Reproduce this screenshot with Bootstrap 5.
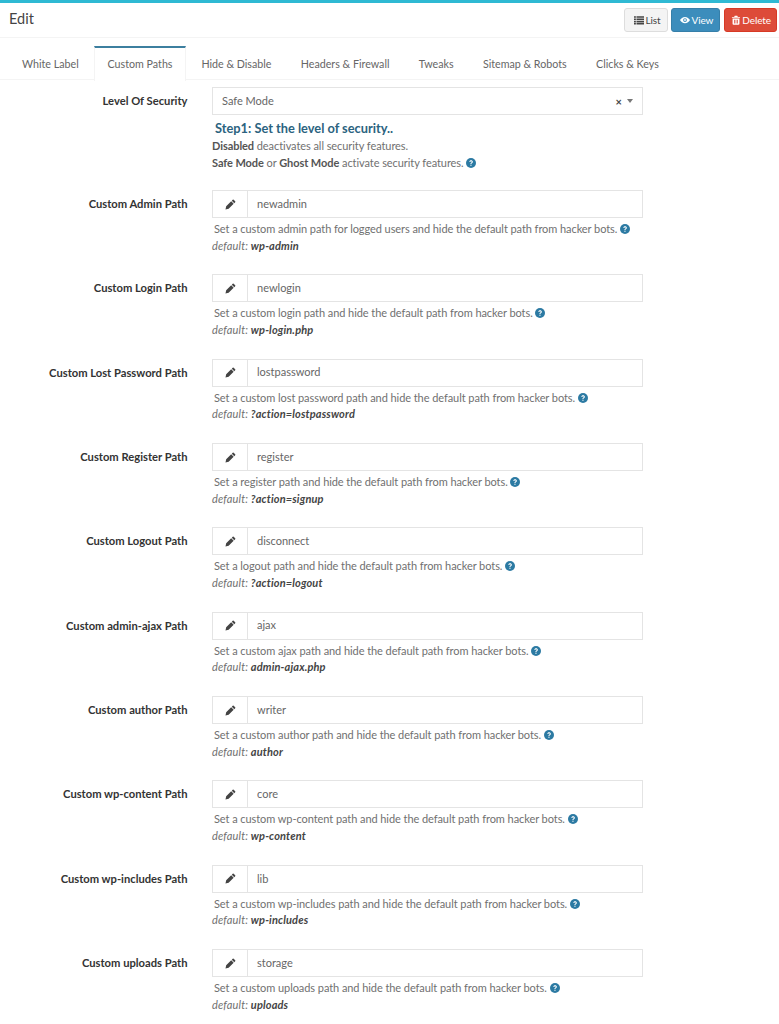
<!DOCTYPE html>
<html lang="en"><head><meta charset="utf-8"><title>Edit</title>
<link href="https://cdn.jsdelivr.net/npm/bootstrap@5.3.0/dist/css/bootstrap.min.css" rel="stylesheet">
<style>
body{font-family:Lato,"Noto Sans",sans-serif;font-size:11px;color:#707070;background:#fff;overflow:hidden}
.panel-box{border-top:3px solid #2fb9d3;height:1024px}
.panel-head{height:35px;padding:0 2px 0 9px;border-bottom:1px solid #f4f4f4}
.panel-title{font-size:14.5px;color:#444;margin-top:-2px}
.act-wrap{gap:3px}
.act{font-size:10px;height:24px;padding:0 6px 0 8px;border-radius:3px;border:1px solid;display:inline-flex;align-items:center;gap:1px;letter-spacing:-.1px}
.act svg{width:10px;height:10px;fill:currentColor}
.act-list{background:#f4f4f4;border-color:#ddd;color:#444;padding:0 7px 0 9px}
.act-view{background:#3c8dbc;border-color:#367fa9;color:#fff}
.act-del{background:#dd4b39;border-color:#d73925;color:#fff;padding:0 5px 0 6px;margin-left:1px}
.tabbar{margin-top:8px;height:34px;padding-left:7.300px;border-bottom:1px solid #f4f4f4}
.tabitem{padding:0 14.700px;line-height:32px;color:#666;border-top:2px solid transparent;font-size:10.7px}
.tabitem.on{padding:0 12.500px;margin:0 .7px;border-top-color:#3c7f9f;border-left:1px solid #f4f4f4;border-right:1px solid #f4f4f4;background:#fff;height:35px}
.sec-row{height:84.35px}
.sec-row.first{height:103px;margin-top:7px}
.sec-label{width:187.500px;flex:none;text-align:right;font-weight:700;color:#333;line-height:28px;font-size:11.2px}
.sec-main{width:431px;flex:none;margin-left:24.500px}
.sec-select{height:28px;border:1px solid #e4e4e4;padding:0 9px;color:#666}
.xmark{font-size:11px;font-weight:700;color:#444;margin-right:5px;line-height:1}
.caret-d{width:0;height:0;border:3.500px solid transparent;border-top:4px solid #777;border-bottom:0}
.sec-input{height:28px;border:1px solid #e4e4e4}
.sec-addon{width:35px;border-right:1px solid #e4e4e4;flex:none}
.sec-addon svg{width:11px;height:11px;fill:#444}
.sec-val{padding-left:9px;color:#666}
.hlp{line-height:16.500px;margin-top:3px}
.hlp.lead-in{margin-top:1px}
.hlp p{margin:0;white-space:nowrap;letter-spacing:-.07px}
.hlp .ind{padding-left:2px}
.hlp b{color:#555;font-weight:700}
.hlp .dflt{letter-spacing:.15px}
.hlp .dflt b{color:#444}
.steptxt{font-size:12.800px;font-weight:700;color:#2b6380;padding-left:3px;line-height:18px;margin-top:4px}
.qm{width:10px;height:10px;display:inline-block;vertical-align:-1px;margin-left:0}
</style></head><body>
<svg width="0" height="0" class="d-block" aria-hidden="true"><defs>
<symbol id="q" viewBox="0 0 20 20"><circle cx="10" cy="10" r="10" fill="#2c7aa3"/><path d="M6.6 7.6C6.8 5.6 8.300 4.600 10.200 4.600c2 0 3.500 1.200 3.500 3 0 1.500-.9 2.200-1.900 2.900-.7.500-.9.800-.9 1.700H8.800c0-1.500.4-2.200 1.400-2.900.8-.6 1.300-1 1.300-1.600 0-.7-.6-1.200-1.400-1.200-.9 0-1.400.5-1.500 1.400z" fill="#fff"/><rect x="8.800" y="13.400" width="2.200" height="2.200" fill="#fff"/></symbol>
<symbol id="pen" viewBox="0 0 16 16"><path d="M11.200 1.200a1 1 0 0 1 1.400 0l2.200 2.200a1 1 0 0 1 0 1.400l-1.300 1.300-3.600-3.600zM9 3.400l3.600 3.600-7.300 7.300-4.600 1 1-4.600z"/></symbol>
<symbol id="lst" viewBox="0 0 16 16"><path d="M0 2h3v2.500H0zM4 2h12v2.500H4zM0 5.500h3V8H0zM4 5.500h12V8H4zM0 9h3v2.500H0zM4 9h12v2.500H4zM0 12.500h3V15H0zM4 12.500h12V15H4z"/></symbol>
<symbol id="eye" viewBox="0 0 16 16"><path fill-rule="evenodd" d="M8 3C4.500 3 1.600 5.200 0 8c1.600 2.800 4.500 5 8 5s6.400-2.200 8-5c-1.600-2.800-4.500-5-8-5zm0 2a3 3 0 1 1 0 6 3 3 0 0 1 0-6z"/><circle cx="8" cy="8" r="1.500"/></symbol>
<symbol id="trs" viewBox="0 0 16 16"><path d="M6 1h4l1 2h3.500v1.500h-13V3H5zM2.500 5.500h11V14a1.500 1.500 0 0 1-1.500 1.500H4A1.500 1.500 0 0 1 2.500 14zM5 7.500v6h1.200v-6zm2.400 0v6h1.200v-6zm2.400 0v6H11v-6z"/></symbol>
</defs></svg>
<div class="panel-box">
 <div class="panel-head d-flex align-items-center justify-content-between">
  <span class="panel-title">Edit</span>
  <div class="d-flex act-wrap">
   <a class="act act-list text-decoration-none"><svg><use href="#lst"/></svg>List</a>
   <a class="act act-view text-decoration-none"><svg><use href="#eye"/></svg>View</a>
   <a class="act act-del text-decoration-none"><svg><use href="#trs"/></svg>Delete</a>
  </div>
 </div>
 <div class="tabbar d-flex">
  <span class="tabitem">White Label</span><span class="tabitem on">Custom Paths</span><span class="tabitem">Hide &amp; Disable</span><span class="tabitem">Headers &amp; Firewall</span><span class="tabitem">Tweaks</span><span class="tabitem">Sitemap &amp; Robots</span><span class="tabitem">Clicks &amp; Keys</span>
 </div>
 <div class="sec-row first d-flex">
  <div class="sec-label">Level Of Security</div>
  <div class="sec-main">
   <div class="sec-select d-flex align-items-center"><span class="flex-grow-1">Safe Mode</span><span class="xmark">×</span><span class="caret-d"></span></div>
   <div class="steptxt">Step1: Set the level of security..</div>
   <div class="hlp lead-in"><p><b>Disabled</b> deactivates all security features.</p><p><b>Safe Mode</b> or <b>Ghost Mode</b> activate security features. <svg class="qm"><use href="#q"/></svg></p></div>
  </div>
 </div>
 <div id="rows"></div>
</div>
<script>
const rows=[["Custom Admin Path","newadmin","Set a custom admin path for logged users and hide the default path from hacker bots.","wp-admin"],
["Custom Login Path","newlogin","Set a custom login path and hide the default path from hacker bots.","wp-login.php"],
["Custom Lost Password Path","lostpassword","Set a custom lost password path and hide the default path from hacker bots.","?action=lostpassword"],
["Custom Register Path","register","Set a register path and hide the default path from hacker bots.","?action=signup"],
["Custom Logout Path","disconnect","Set a logout path and hide the default path from hacker bots.","?action=logout"],
["Custom admin-ajax Path","ajax","Set a custom ajax path and hide the default path from hacker bots.","admin-ajax.php"],
["Custom author Path","writer","Set a custom author path and hide the default path from hacker bots.","author"],
["Custom wp-content Path","core","Set a custom wp-content path and hide the default path from hacker bots.","wp-content"],
["Custom wp-includes Path","lib","Set a custom wp-includes path and hide the default path from hacker bots.","wp-includes"],
["Custom uploads Path","storage","Set a custom uploads path and hide the default path from hacker bots.","uploads"]];
document.getElementById('rows').innerHTML=rows.map(r=>`<div class="sec-row d-flex"><div class="sec-label">${r[0]}</div><div class="sec-main"><div class="sec-input d-flex"><span class="sec-addon d-flex align-items-center justify-content-center"><svg><use href="#pen"/></svg></span><span class="sec-val d-flex align-items-center">${r[1]}</span></div><div class="hlp"><p class="ind">${r[2]} <svg class="qm"><use href="#q"/></svg></p><p class="dflt"><i>default: <b>${r[3]}</b></i></p></div></div></div>`).join('');
</script>
<script src="https://cdn.jsdelivr.net/npm/bootstrap@5.3.0/dist/js/bootstrap.bundle.min.js"></script>
</body></html>
